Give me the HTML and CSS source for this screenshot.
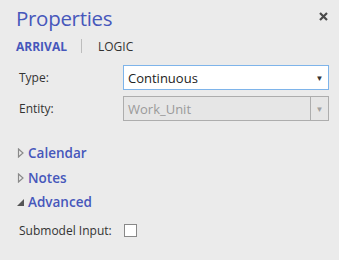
FILE: index.html
```html
<!DOCTYPE html>
<html lang="en">
<head>
  <meta charset="UTF-8" />
  <title>Properties</title>
  <link rel="stylesheet" href="styles.css">
</head>
<body>
  <div class="panel">
    <div class="header">
      <h1 class="title">Properties</h1>
      <span class="close">
        <svg width="9" height="9" viewBox="0 0 9 9">
          <path d="M1 1 L8 8 M8 1 L1 8" stroke="#4a4a4a" stroke-width="2.2" />
        </svg>
      </span>
    </div>

    <div class="tabs">
      <span class="tab active">ARRIVAL</span>
      <span class="tab-sep"></span>
      <span class="tab">LOGIC</span>
    </div>

    <div class="form">
      <div class="row">
        <label class="label">Type:</label>
        <div class="select focus">
          <span class="value">Continuous</span>
          <span class="arrow">▼</span>
        </div>
      </div>
      <div class="row">
        <label class="label">Entity:</label>
        <div class="select disabled">
          <span class="value">Work_Unit</span>
          <span class="arrow">▼</span>
        </div>
      </div>
    </div>

    <div class="sections">
      <div class="section">
        <svg class="caret" width="10" height="10" viewBox="0 0 10 10">
          <path d="M1.5 1 L6 5 L1.5 9 Z" fill="none" stroke="#8a8a8a" stroke-width="1.2" />
        </svg>
        Calendar
      </div>
      <div class="section">
        <svg class="caret" width="10" height="10" viewBox="0 0 10 10">
          <path d="M1.5 1 L6 5 L1.5 9 Z" fill="none" stroke="#8a8a8a" stroke-width="1.2" />
        </svg>
        Notes
      </div>
      <div class="section">
        <svg class="caret" width="10" height="10" viewBox="0 0 10 10">
          <path d="M0 9 L7 9 L7 2 Z" fill="#555" />
        </svg>
        Advanced
      </div>
    </div>

    <div class="row check-row">
      <label class="label">Submodel Input:</label>
      <span class="checkbox"></span>
    </div>
  </div>
</body>
</html>
```

FILE: styles.css
```css
body {
  margin: 0;
  background-color: #ebebeb;
  font-family: "Open Sans", Arial, sans-serif;
  color: #333;
}

.panel {
  width: 339px;
  height: 260px;
  padding: 0 10px 0 16px;
  box-sizing: border-box;
}

.header {
  display: flex;
  justify-content: space-between;
  align-items: flex-start;
  height: 34px;
}

.title {
  margin: 0;
  padding-top: 4px;
  font-size: 20.5px;
  letter-spacing: -0.3px;
  font-weight: normal;
  color: #4657bb;
  line-height: 28px;
}

.close {
  display: flex;
  margin-top: 12px;
  margin-right: 1px;
}

.tabs {
  display: flex;
  align-items: center;
  height: 24px;
  font-size: 12px;
}

.tab {
  color: #333;
}

.tab.active {
  color: #4657bb;
  font-weight: bold;
}

.tab-sep {
  width: 1px;
  height: 14px;
  background-color: #bdbdbd;
  margin: 0 16px 0 14px;
}

.form {
  padding-top: 7px;
}

.row {
  display: flex;
  align-items: center;
  height: 25px;
  margin-bottom: 6px;
  padding-left: 3px;
  font-size: 12px;
}

.label {
  width: 104px;
}

.select {
  display: flex;
  align-items: center;
  width: 206px;
  height: 25px;
  box-sizing: border-box;
  font-size: 13px;
}

.select .value {
  flex: 1;
  padding-left: 4px;
}

.select .arrow {
  font-size: 8px;
  width: 17px;
  text-align: center;
}

.select.focus {
  background-color: white;
  border: 1px solid #7eb4ea;
  color: #222;
}

.select.focus .arrow {
  color: #333;
}

.select.disabled {
  background-color: #e6e6e6;
  border: 1px solid #adadad;
  color: #9a9a9a;
}

.select.disabled .arrow {
  border-left: 1px solid #adadad;
  height: 100%;
  line-height: 23px;
  color: #a0a0a0;
}

.sections {
  padding-top: 14px;
}

.section {
  display: flex;
  align-items: center;
  height: 24.5px;
  padding-left: 1px;
  font-size: 13.5px;
  font-weight: 600;
  color: #4657bb;
}

.caret {
  margin-right: 1px;
}

.check-row {
  margin-top: 3px;
}

.checkbox {
  width: 11px;
  height: 11px;
  border: 1px solid #888;
  background-color: white;
  margin-left: 1px;
}
```
